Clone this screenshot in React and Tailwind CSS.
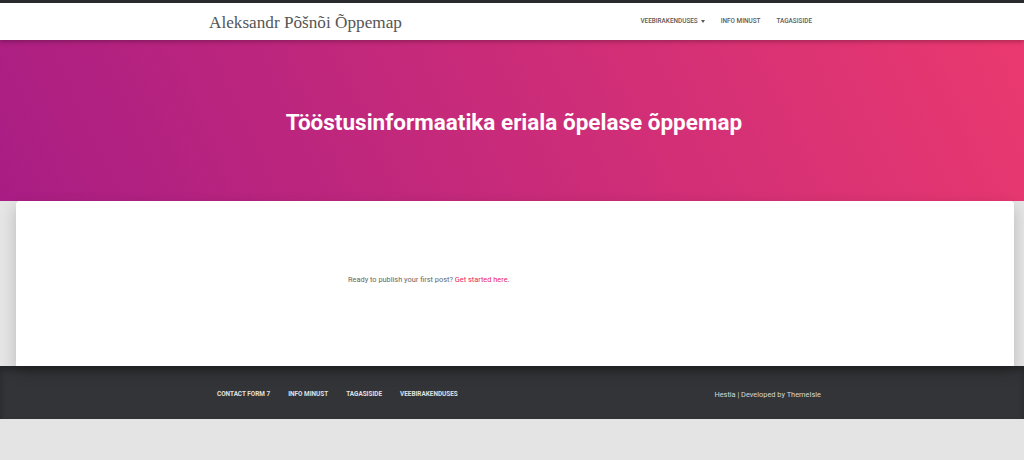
export default function App() {
  return (
    <div className="w-[1024px] h-[460px] overflow-hidden bg-[#e4e4e4]" style={{ fontFamily: "Roboto, 'Liberation Sans', sans-serif" }}>
      <div className="h-[3px] bg-[#2b2c2e]" />
      <nav className="relative z-20 h-[37px] bg-white shadow-[0_2px_4px_rgba(0,0,0,0.25)]">
        <div className="mx-auto flex h-full w-[606px] items-center justify-between">
          <span className="text-[17.2px] leading-none text-[#555] pt-[2px]" style={{ fontFamily: "'Liberation Serif', serif" }}>
            Aleksandr Põšnõi Õppemap
          </span>
          <ul className="flex items-center gap-[16px] pr-[3px] text-[6.4px] font-medium uppercase text-[#5a5a5a]">
            <li className="flex items-center gap-[3px]">
              Veebirakenduses
              <span className="inline-block h-0 w-0 border-x-[2.5px] border-t-[3px] border-x-transparent border-t-[#5a5a5a]" />
            </li>
            <li>Info minust</li>
            <li>Tagasiside</li>
          </ul>
        </div>
      </nav>
      <header className="relative z-10 flex h-[193px] items-start justify-center bg-[linear-gradient(65deg,#a81d84_0%,#ea396f_100%)] pl-[4px] pt-[71px]">
        <h1 className="text-[22.5px] font-bold leading-none text-white">Tööstusinformaatika eriala õpelase õppemap</h1>
      </header>
      <main className="relative z-10 bg-[#e5e5e5] px-[16px] pr-[10px]">
        <div className="-mt-[32px] h-[165px] rounded-t-[4px] bg-white pl-[332px] pt-[73px] shadow-[0_6px_16px_rgba(0,0,0,0.2)]">
          <p className="text-[7.4px] text-[#666]">
            Ready to publish your first post? <span className="text-[#e91e63]">Get started here</span>.
          </p>
        </div>
      </main>
      <footer className="flex h-[53px] items-center justify-between bg-[#323437] pl-[217px] pr-[203px] pt-[4px] shadow-[inset_0_4px_6px_rgba(0,0,0,0.3)]">
        <ul className="flex items-center gap-[18px] text-[6.4px] font-bold uppercase text-[#e0e0e0]">
          <li>Contact Form 7</li>
          <li>Info minust</li>
          <li>Tagasiside</li>
          <li>Veebirakenduses</li>
        </ul>
        <span className="text-[7.4px] text-[#d8d8d8]">Hestia | Developed by ThemeIsle</span>
      </footer>
    </div>
  );
}
